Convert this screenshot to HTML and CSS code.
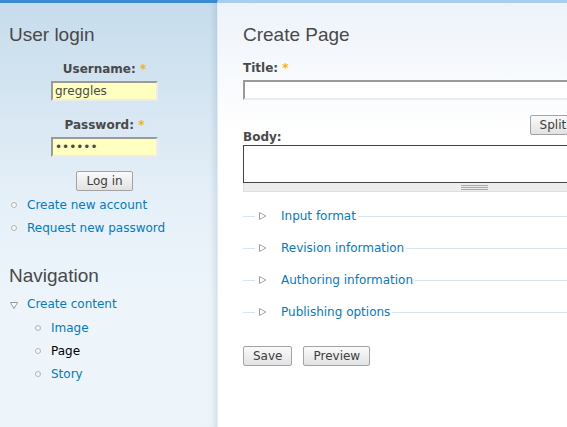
FILE: index.html
```html
<!DOCTYPE html>
<html lang="en">
<head>
<meta charset="utf-8">
<title>Create Page</title>
<link rel="stylesheet" href="styles.css">
</head>
<body>
<div class="page">
  <aside class="sidebar">
    <h2 class="block-title">User login</h2>
    <form class="login">
      <label class="lbl" for="name">Username: <span class="req">*</span></label>
      <input class="login-input" id="name" type="text" value="greggles">
      <label class="lbl lbl-pw" for="pass">Password: <span class="req">*</span></label>
      <input class="login-input" id="pass" type="password" value="secret">
      <button class="btn btn-login" type="button">Log in</button>
    </form>
    <ul class="links">
      <li class="leaf"><a href="#">Create new account</a></li>
      <li class="leaf"><a href="#">Request new password</a></li>
    </ul>
    <h2 class="block-title nav-title">Navigation</h2>
    <ul class="menu">
      <li class="expanded">
        <div class="menu-row">
          <svg class="tri-down" width="8" height="7" viewBox="0 0 8 7"><path d="M0.5 0.5 H7.5 L4 6.5 Z" fill="#fff" stroke="#9a9a9a" stroke-width="1"/></svg>
          <a href="#">Create content</a>
        </div>
        <ul class="sub">
          <li class="leaf"><a href="#">Image</a></li>
          <li class="leaf"><a href="#" class="active">Page</a></li>
          <li class="leaf"><a href="#">Story</a></li>
        </ul>
      </li>
    </ul>
  </aside>
  <main class="main">
    <h2 class="block-title">Create Page</h2>
    <form class="node-form">
      <label class="lbl" for="title">Title: <span class="req">*</span></label>
      <input class="title-input" id="title" type="text" value="">
      <div class="body-row">
        <label class="lbl body-lbl" for="body">Body:</label>
        <button class="btn btn-split" type="button">Split summary at cursor</button>
      </div>
      <textarea class="body-text" id="body"></textarea>
      <div class="grippie"><span class="grip"></span></div>
      <div class="fieldsets">
        <div class="fs"><span class="seg"></span><svg class="tri-right" width="8" height="8" viewBox="0 0 8 8"><path d="M0.5 0.5 L7 4 L0.5 7.5 Z" fill="#fff" stroke="#a4a4a4" stroke-width="1"/></svg><a href="#">Input format</a><span class="fill"></span></div>
        <div class="fs"><span class="seg"></span><svg class="tri-right" width="8" height="8" viewBox="0 0 8 8"><path d="M0.5 0.5 L7 4 L0.5 7.5 Z" fill="#fff" stroke="#a4a4a4" stroke-width="1"/></svg><a href="#">Revision information</a><span class="fill"></span></div>
        <div class="fs"><span class="seg"></span><svg class="tri-right" width="8" height="8" viewBox="0 0 8 8"><path d="M0.5 0.5 L7 4 L0.5 7.5 Z" fill="#fff" stroke="#a4a4a4" stroke-width="1"/></svg><a href="#">Authoring information</a><span class="fill"></span></div>
        <div class="fs"><span class="seg"></span><svg class="tri-right" width="8" height="8" viewBox="0 0 8 8"><path d="M0.5 0.5 L7 4 L0.5 7.5 Z" fill="#fff" stroke="#a4a4a4" stroke-width="1"/></svg><a href="#">Publishing options</a><span class="fill"></span></div>
      </div>
      <div class="actions">
        <button class="btn" type="button">Save</button>
        <button class="btn" type="button">Preview</button>
      </div>
    </form>
  </main>
</div>
</body>
</html>
```
FILE: styles.css
```css
html, body {
  margin: 0;
  height: 100%;
  overflow: hidden;
}
body {
  font: 12px/16px "DejaVu Sans", Verdana, sans-serif;
  color: #494949;
  background: #fff;
}
a {
  color: #027ac6;
  text-decoration: none;
}
ul {
  list-style: none;
  margin: 0;
  padding: 0;
}
.page {
  display: flex;
  height: 427px;
}
.sidebar {
  width: 218px;
  flex: none;
  box-sizing: border-box;
  padding-left: 9px;
  border-top: 3px solid #3b88d3;
  background: linear-gradient(#c6dcec, #e6f0f8 200px, #edf5fb 300px, #edf5fb);
  box-shadow: inset -7px 0 6px -5px rgba(60, 100, 140, 0.18);
  border-right: 1px solid #e4edf5;
}
.block-title {
  margin: 21px 0 0;
  font: normal 19px/22px "Liberation Sans", Arial, sans-serif;
  color: #494949;
}
.lbl {
  display: block;
  font-weight: bold;
  line-height: 16px;
  margin-bottom: 4px;
}
.req {
  color: #ffae00;
}
.login {
  width: 191px;
  margin: 15px 0 0;
  display: flex;
  flex-direction: column;
  align-items: center;
}
.login-input {
  width: 107px;
  height: 20px;
  box-sizing: border-box;
  margin: 0;
  padding: 0 2px;
  border: 2px solid;
  border-color: #9a9a9a #ececec #ececec #9a9a9a;
  background: #ffffc0;
  font: 12px "DejaVu Sans", Verdana, sans-serif;
  color: #494949;
}
.lbl-pw {
  margin-top: 16px;
}
.btn {
  height: 20px;
  box-sizing: border-box;
  margin: 0;
  padding: 0 9px;
  border: 1px solid #a3a3a3;
  border-radius: 2px;
  background: linear-gradient(#fafafa, #e2e2e2);
  font: 12px/18px "DejaVu Sans", Verdana, sans-serif;
  color: #3d3d3d;
}
.btn-login {
  margin-top: 14px;
}
.links {
  margin-top: 3px;
}
.leaf {
  display: flex;
  align-items: flex-start;
  line-height: 23px;
}
.leaf::before {
  content: "";
  flex: none;
  width: 4px;
  height: 4px;
  margin: 8px 10px 0 2px;
  border: 1px solid #b3b3b3;
  border-radius: 50%;
  background: #fdfdfd;
}
.nav-title {
  margin-top: 25px;
}
.menu {
  margin-top: 6px;
}
.menu-row {
  display: flex;
  align-items: flex-start;
  line-height: 23px;
}
.tri-down {
  flex: none;
  margin: 9px 9px 0 1px;
}
.sub {
  margin: 1px 0 0 24px;
}
.sub .active {
  color: #000;
}
.main {
  flex: 1;
  min-width: 0;
  overflow: hidden;
  padding-left: 25px;
  border-top: 3px solid #a9cdef;
  background: linear-gradient(#edf3fa, #fbfcfe 100px, #fff 130px);
}
.node-form {
  width: 463px;
  margin-top: 14px;
}
.title-input {
  display: block;
  width: 100%;
  height: 20px;
  box-sizing: border-box;
  margin: 0;
  border: 2px solid;
  border-color: #9a9a9a #ececec #ececec #9a9a9a;
  background: #fff;
}
.body-row {
  display: flex;
  justify-content: space-between;
  margin-top: 15px;
  height: 30px;
}
.body-lbl {
  align-self: flex-end;
  margin: 0;
}
.btn-split {
  margin-right: 12px;
}
.body-text {
  display: block;
  width: 100%;
  height: 38px;
  box-sizing: border-box;
  margin: 0;
  border: 1px solid #444;
  resize: none;
  background: #fff;
}
.grippie {
  height: 9px;
  box-sizing: border-box;
  border: 1px solid #dedede;
  border-top: 0;
  background: #ededed;
  display: flex;
  justify-content: center;
  align-items: center;
}
.grip {
  width: 27px;
  height: 5px;
  background: repeating-linear-gradient(#a9a9a9 0 1px, transparent 1px 2px);
}
.fieldsets {
  margin-top: 8px;
}
.fs {
  height: 32px;
  display: flex;
  align-items: center;
}
.seg {
  width: 12px;
  height: 1px;
  background: #d6e4ee;
  flex: none;
}
.tri-right {
  flex: none;
  margin: 0 14px 0 4px;
}
.fill {
  flex: 1;
  height: 1px;
  margin-left: 2px;
  background: #d6e4ee;
}
.actions {
  display: flex;
  gap: 11px;
  margin-top: 18px;
}
```
